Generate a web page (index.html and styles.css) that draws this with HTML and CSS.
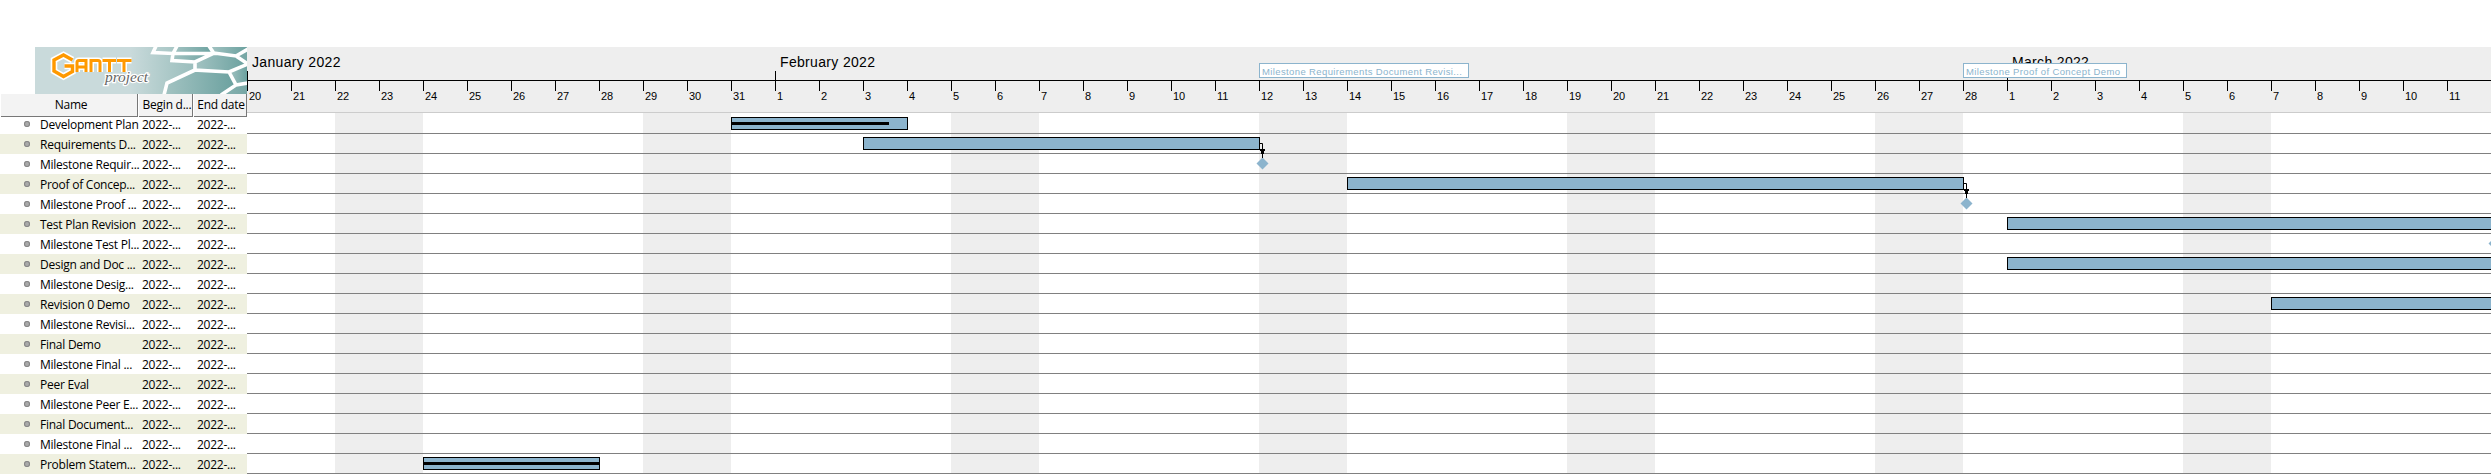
FILE: index.html
```
<!DOCTYPE html>
<html lang="en">
<head>
<meta charset="utf-8">
<title>GanttProject</title>
<link rel="stylesheet" href="styles.css">
</head>
<body>
<main class="app">
  <section class="sidebar">
    <svg class="logo" viewBox="0 0 212 47" width="212" height="47">
      <defs>
        <linearGradient id="bg" x1="0" x2="1" y1="0" y2="0">
          <stop offset="0" stop-color="#c9dadb"/><stop offset=".45" stop-color="#c9dadb"/>
          <stop offset=".65" stop-color="#a9c7c6"/><stop offset="1" stop-color="#77a7a5"/>
        </linearGradient>
        <linearGradient id="cell" x1="0" x2="1" y1="0" y2="0">
          <stop offset="0" stop-color="#a3c3c2"/><stop offset="1" stop-color="#6ba19f"/>
        </linearGradient>
      </defs>
      <rect width="212" height="47" fill="url(#bg)"/>
      <g fill="url(#cell)">
        <path d="M142 0h33l4 5.500-41 1z"/><path d="M138 6.500h41l-19 9-23-2z"/>
        <path d="M160 15l19-9 22 3 10 7-17 9-34-2z"/><path d="M160 23l34 2 7 14-13 8h-58l2-11z"/>
        <path d="M175 0h37v3l-11 6-22-3.500z"/><path d="M194 25l18-7v19l-11 2z"/>
      </g>
      <g class="mesh">
        <path d="M121-1l-3 6.500 20 1L142-1M138 6.500h41L174-1M138 6.500l-1 7 23 1.500 19-9 22 3 12-7M201 9l12 8M160 15v8l34 2 19-8M160 23l-28 13-3 12M194 25l7 13-15 10M201 38l12-2"/>
      </g>
      <path class="logo-g" d="M37.500 13L28.500 8 19 13v11l9.500 5.500 9-5V19h-8"/>
      <g class="logo-caps logo-halo"><path d="M42 25V15.500q0-2 2-2h7V25M42 20h9M56 25V13.500h7q2 0 2 2V25M67.500 13.500H81M74.500 13v12M82 13.500h14.500M89 13v12"/></g>
      <path class="logo-g logo-g-front" d="M37.500 13L28.500 8 19 13v11l9.500 5.500 9-5V19h-8"/>
      <g class="logo-caps"><path d="M42 25V15.500q0-2 2-2h7V25M42 20h9M56 25V13.500h7q2 0 2 2V25M67.500 13.500H81M74.500 13v12M82 13.500h14.500M89 13v12"/></g>
      <text class="logo-sub" x="70" y="35" textLength="43" lengthAdjust="spacingAndGlyphs">project</text>
    </svg>
    <div class="head">
      <span class="head-cell">Name</span><span class="head-cell">Begin d...</span><span class="head-cell">End date</span>
    </div>
    <div class="tasks" id="tasks"></div>
  </section>
  <section class="chart">
    <header class="timeline">
      <div class="months"><span class="month">January 2022</span><span class="month">February 2022</span><span class="month">March 2022</span></div>
      <div class="days" id="days"></div>
      <span class="flag flag-req"><span>Milestone Requirements Document Revisi...</span></span>
      <span class="flag flag-poc"><span>Milestone Proof of Concept Demo</span></span>
    </header>
    <div class="rows" id="rows"></div>
  </section>
</main>
<script src="chart.js"></script>
</body>
</html>
```
FILE: styles.css
```
body { margin: 0; background: #fff; }
.app { display: grid; grid-template-columns: 247px 2244px; height: 474px; overflow: hidden; padding-top: 47px; box-sizing: border-box; }
.sidebar { font: 12px/20px "Open Sans", "Noto Sans", sans-serif; letter-spacing: -.25px; color: #000; }
.logo { display: block; margin-left: 35px; }
.mesh { fill: none; stroke: #fff; stroke-width: 3.6; }
.logo-g { fill: none; stroke: #fff; stroke-width: 6.6; }
.logo-g-front { stroke: #ff9900; stroke-width: 3.4; }
.logo-caps { fill: none; stroke: #ff9900; stroke-width: 3; }
.logo-halo { stroke: #fff; stroke-width: 6; }
.logo-sub { font: italic 15px "Liberation Serif", serif; letter-spacing: 0; fill: #666; stroke: #fff; stroke-width: 2.5px; paint-order: stroke; }
.head { display: grid; grid-template-columns: 137px 54px 53px; gap: 1px; margin-left: 1px; height: 20px; }
.head-cell { box-sizing: border-box; background: #f3f3f3; border-right: 1px solid #777; border-bottom: 1px solid #777; text-align: center; line-height: 22px; white-space: nowrap; }
.head-cell:first-child { padding-left: 4px; }
.head-cell:nth-child(2) { padding-left: 3px; }
.head-cell:nth-child(3) { padding-left: 2px; }
.task { display: grid; grid-template-columns: 40px 102px 55px 50px; height: 20px; line-height: 22px; white-space: nowrap; }
.task:nth-child(even) { background: #eff0e0; }
.dot { width: 6px; height: 6px; margin: 7px 0 0 24px; border-radius: 50%; background: #aaa; box-shadow: inset 0 0 0 1px #858585; }
.chart { overflow: hidden; }
.timeline { position: relative; height: 65px; background: #eee; border-bottom: 1px solid #ccc; font-family: "Liberation Sans", Arial, sans-serif; color: #000; }
.months { display: grid; grid-template-columns: 528px 1232px 484px; height: 33px; }
.month { padding-left: 5px; font-size: 14px; line-height: 31px; letter-spacing: .33px; height: 33px; }
.days { display: grid; grid-template-columns: repeat(51, 44px); border-top: 1px solid #000; height: 31px; }
.day { border-left: 1px solid #000; height: 10px; font-size: 11px; line-height: 30px; padding-left: 1px; white-space: nowrap; }
.day-first { height: 20px; margin-top: -10px; line-height: 50px; }
.flag { position: absolute; top: 16px; height: 13px; border: 1px solid #8cb4cd; background: #fff; color: #8cb4cd; font-size: 9.5px; line-height: 16px; padding-left: 2px; white-space: nowrap; }
.flag-req { left: 1012px; width: 206px; letter-spacing: .38px; }
.flag-poc { left: 1716px; width: 160px; letter-spacing: .38px; }
.rows { height: 361px; background: repeating-linear-gradient(90deg, transparent 0 88px, #eee 88px 176px, transparent 176px 308px); }
.row { position: relative; display: grid; grid-template-columns: repeat(51, 44px); height: 19px; border-bottom: 1px solid #808080; }
.row:first-child { height: 20px; }
.row:first-child .bar { margin-top: 4px; }
.bar { box-sizing: border-box; grid-row: 1; height: 13px; margin: 3px -1px 0 0; border: 1px solid #000; background: #8cb4cd; }
.progress { height: 3px; margin-top: 4px; background: #000; }
.marker { position: absolute; top: 3px; width: 13px; height: 13px; }
.link { position: absolute; top: 9px; width: 8px; height: 16px; z-index: 1; }
```
FILE: chart.js
```
const tasks = [
  ['Development Plan', 11, 4, 157], ['Requirements D...', 14, 9, 0, true], ['Milestone Requir...', null, 0, 0, 1008.5],
  ['Proof of Concep...', 25, 14, 0, true], ['Milestone Proof ...', null, 0, 0, 1712.5], ['Test Plan Revision', 40, 12],
  ['Milestone Test Pl...', null, 0, 0, 2240.5], ['Design and Doc ...', 40, 12], ['Milestone Desig...'],
  ['Revision 0 Demo', 46, 6], ['Milestone Revisi...'], ['Final Demo'], ['Milestone Final ...'], ['Peer Eval'],
  ['Milestone Peer E...'], ['Final Document...'], ['Milestone Final ...'], ['Problem Statem...', 4, 4, 175]
];

document.getElementById('tasks').innerHTML = tasks.map(([name]) =>
  `<div class="task"><i class="dot"></i><span>${name}</span><span>2022-...</span><span>2022-...</span></div>`).join('');

let days = '';
for (let i = 0; i < 51; i++) {
  const date = new Date(2022, 0, 20 + i).getDate();
  days += `<span class="day${i === 0 || date === 1 ? ' day-first' : ''}">${date}</span>`;
}
document.getElementById('days').innerHTML = days;

document.getElementById('rows').innerHTML = tasks.map(([, start, span, progress, extra]) => {
  let out = '';
  if (start != null) {
    // A bar that runs past the visible range keeps its right edge outside the chart.
    const clipped = start + span > 51;
    out += `<div class="bar" style="grid-column:${start + 1} / span ${clipped ? 51 - start : span}">` +
      (progress ? `<div class="progress" style="width:${progress}px"></div>` : '') + '</div>';
    if (extra) {
      const x = (start + span) * 44;
      out += `<svg class="link" style="left:${x}px" viewBox="0 0 8 16"><path d="M1 .5h2.500v14.500" fill="none" stroke="#000"/><path d="M1 6h5v2h-1v3h-3v-3h-1z"/></svg>`;
    }
  } else if (extra) {
    out += `<svg class="marker" style="left:${extra}px" viewBox="0 0 13 13"><path d="M6.500 .5l6 6-6 6-6-6z" fill="#8cb4cd"/></svg>`;
  }
  return `<div class="row">${out}</div>`;
}).join('');
```
